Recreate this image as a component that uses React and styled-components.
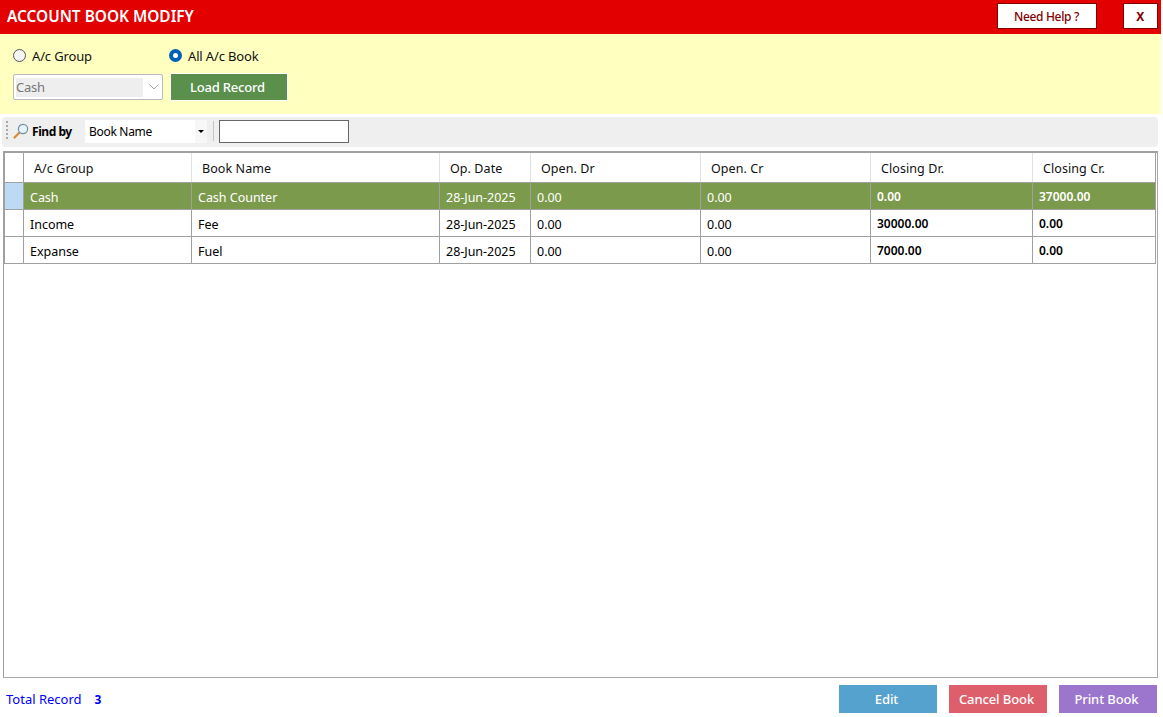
import React from "react";
import styled, { createGlobalStyle } from "styled-components";

const GlobalStyle = createGlobalStyle`
  html, body {
    margin: 0;
    padding: 0;
    background: #fff;
  }
  body {
    font-family: "Noto Sans", "Open Sans", "Liberation Sans", sans-serif;
    font-size: 12px;
    color: #000;
  }
`;

const COLUMNS = "18px 168px 248px 91px 170px 170px 162px 1fr";

const columns = [
  { label: "A/c Group", key: "group" },
  { label: "Book Name", key: "book" },
  { label: "Op. Date", key: "date" },
  { label: "Open. Dr", key: "openDr" },
  { label: "Open. Cr", key: "openCr" },
  { label: "Closing Dr.", key: "closeDr", bold: true },
  { label: "Closing Cr.", key: "closeCr", bold: true },
];

const rows = [
  { group: "Cash", book: "Cash Counter", date: "28-Jun-2025", openDr: "0.00", openCr: "0.00", closeDr: "0.00", closeCr: "37000.00", selected: true },
  { group: "Income", book: "Fee", date: "28-Jun-2025", openDr: "0.00", openCr: "0.00", closeDr: "30000.00", closeCr: "0.00" },
  { group: "Expanse", book: "Fuel", date: "28-Jun-2025", openDr: "0.00", openCr: "0.00", closeDr: "7000.00", closeCr: "0.00" },
];

const Page = styled.div`
  width: 1161px;
  height: 717px;
  display: flex;
  flex-direction: column;
  overflow: hidden;
`;

const TitleBar = styled.header`
  height: 34px;
  flex: none;
  background: #e30000;
  display: flex;
  align-items: center;
  padding: 3px 3px 5px 7px;
  box-sizing: border-box;
`;

const Title = styled.h1`
  margin: 0 auto 0 0;
  color: #fff;
  font-size: 15.4px;
  font-weight: 600;
`;

const HeaderButton = styled.button`
  height: 26px;
  width: ${(p) => p.$width}px;
  margin-left: ${(p) => p.$gap}px;
  padding: 0 1px 0 0;
  background: #fff;
  border: 1px solid #800000;
  color: #800000;
  font: inherit;
  font-size: 12px;
  font-weight: ${(p) => (p.$bold ? 700 : 500)};
  letter-spacing: -0.35px;
`;

const FilterPanel = styled.section`
  height: 80px;
  flex: none;
  box-sizing: border-box;
  background: #ffffc0;
  padding: 13px 13px 0;
  display: grid;
  grid-template-columns: 156px 1fr;
  grid-template-rows: 17px 28px;
  row-gap: 9px;
  align-items: center;
`;

const RadioLabel = styled.label`
  display: flex;
  align-items: center;
  gap: 6px;
  font-size: 13px;
  letter-spacing: -0.15px;
  color: #111;
`;

const RadioDot = styled.span`
  box-sizing: border-box;
  width: 13px;
  height: 13px;
  border-radius: 50%;
  border: ${(p) => (p.$on ? "4px solid #0060b8" : "1px solid #555")};
  background: ${(p) => (p.$on ? "#fff" : "#f4f4f4")};
`;

const GroupSelect = styled.div`
  box-sizing: border-box;
  width: 150px;
  height: 26px;
  background: #fff;
  border: 1px solid #bbb;
  border-radius: 2px;
  padding: 2px;
  display: flex;
  align-items: center;
  color: #777;
  font-size: 13px;
  letter-spacing: -0.25px;
`;

const GroupValue = styled.span`
  width: 127px;
  height: 19px;
  background: #eeeeee;
  display: flex;
  align-items: center;
`;

const GroupArrow = styled.svg`
  margin-left: 5px;
`;

const LoadButton = styled.button`
  width: 118px;
  height: 28px;
  box-sizing: border-box;
  margin: 0 0 0 1px;
  border: 1px solid #fff;
  background: #5a8f4c;
  color: #fff;
  font: inherit;
  font-size: 13px;
  font-weight: 500;
  letter-spacing: -0.2px;
  padding: 0 3px 0 0;
`;

const Toolbar = styled.div`
  height: 30px;
  flex: none;
  box-sizing: border-box;
  margin: 3px 3px 0 2px;
  background: #efefef;
  border-radius: 4px;
  display: flex;
  align-items: center;
  padding: 0 0 2px 4px;
`;

const Grip = styled.span`
  width: 2px;
  height: 20px;
  background-image: linear-gradient(#a8a8a8 50%, transparent 50%);
  background-size: 2px 4px;
`;

const FindIcon = styled.svg`
  margin-left: 5px;
`;

const FindLabel = styled.span`
  margin-left: 3px;
  width: 53px;
  font-size: 12px;
  font-weight: 700;
  letter-spacing: -0.45px;
`;

const FindSelect = styled.div`
  width: 122px;
  height: 23px;
  background: #fff;
  display: flex;
  align-items: center;
  padding-left: 4px;
  box-sizing: border-box;
  font-size: 12px;
  letter-spacing: -0.3px;
`;

const FindValue = styled.span`
  flex: 1;
`;

const FindCaret = styled.span`
  width: 12px;
  height: 100%;
  background: #f7f7f7;
  display: flex;
  align-items: center;
  justify-content: center;
  &::after {
    content: "";
    border-left: 3px solid transparent;
    border-right: 3px solid transparent;
    border-top: 3px solid #000;
  }
`;

const ToolSeparator = styled.span`
  width: 1px;
  height: 20px;
  background: #c4c4c4;
  margin: 0 5px 0 6px;
`;

const FindInput = styled.input`
  width: 130px;
  height: 23px;
  box-sizing: border-box;
  border: 1px solid #666;
  background: #fff;
  padding: 0 3px;
`;

const GridFrame = styled.div`
  flex: none;
  height: 527px;
  box-sizing: border-box;
  margin: 4px 3px 0 3px;
  border: 1px solid #a8a8a8;
  border-top: 2px solid #a0a0a0;
  border-left: 1px solid #a0a0a0;
`;

const HeadRow = styled.div`
  display: grid;
  grid-template-columns: ${COLUMNS};
  height: 29px;
  margin-right: 1px;
  border-left: 1px solid #a0a0a0;
  border-right: 1px solid #a0a0a0;
  border-bottom: 1px solid #a0a0a0;
`;

const HeadCell = styled.div`
  border-left: 1px solid #e2e2e2;
  padding: 1px 0 0 10px;
  display: flex;
  align-items: center;
  font-size: 12.5px;
  letter-spacing: 0.08px;
  color: #111;
  &:first-child {
    border-left: 0;
    padding: 0;
  }
  &:nth-child(2) {
    border-left-color: #a0a0a0;
  }
`;

const DataRow = styled.div`
  display: grid;
  grid-template-columns: ${COLUMNS};
  height: 26px;
  margin-right: 1px;
  border-left: 1px solid #a0a0a0;
  border-right: 1px solid #a0a0a0;
  border-bottom: 1px solid #a0a0a0;
  background: ${(p) => (p.$selected ? "#7c9a4b" : "#fff")};
  color: ${(p) => (p.$selected ? "#fff" : "#000")};
`;

const RowMarker = styled.div`
  background: ${(p) => (p.$selected ? "#bcdaf3" : "#fff")};
`;

const Cell = styled.div`
  border-left: 1px solid #a0a0a0;
  padding: ${(p) => (p.$bold ? "0" : "2px")} 0 0 6px;
  display: flex;
  align-items: center;
  font-size: ${(p) => (p.$bold ? "12px" : "12.5px")};
  font-weight: ${(p) => (p.$bold ? 600 : 400)};
  letter-spacing: ${(p) => (p.$bold ? "0" : "-0.02px")};
`;

const Footer = styled.footer`
  flex: 1;
  display: flex;
  align-items: flex-start;
  padding: 7px 4px 0 6px;
`;

const Total = styled.div`
  margin-right: auto;
  height: 28px;
  display: flex;
  align-items: center;
  color: #0000ff;
  font-size: 13px;
`;

const TotalCount = styled.b`
  margin-left: 13px;
  font-size: 12px;
`;

const ActionButton = styled.button`
  width: 98px;
  height: 28px;
  margin-left: 12px;
  border: 0;
  padding: 0 3px 0 0;
  background: ${(p) => p.$color};
  color: #fff;
  font: inherit;
  font-size: 13px;
  font-weight: 500;
  letter-spacing: -0.1px;
  &:first-of-type {
    margin-left: 0;
  }
`;

export default function App() {
  return (
    <Page>
      <GlobalStyle />
      <TitleBar>
        <Title>ACCOUNT BOOK MODIFY</Title>
        <HeaderButton $width={100} $gap={0}>Need Help ?</HeaderButton>
        <HeaderButton $width={35} $gap={26} $bold>X</HeaderButton>
      </TitleBar>

      <FilterPanel>
        <RadioLabel><RadioDot />A/c Group</RadioLabel>
        <RadioLabel><RadioDot $on />All A/c Book</RadioLabel>
        <GroupSelect>
          <GroupValue>Cash</GroupValue>
          <GroupArrow width="12" height="8" viewBox="0 0 12 8">
            <path d="M1.5 1.5 6 6l4.5-4.5" fill="none" stroke="#aaa" strokeWidth="1" />
          </GroupArrow>
        </GroupSelect>
        <LoadButton>Load Record</LoadButton>
      </FilterPanel>

      <Toolbar>
        <Grip />
        <FindIcon width="16" height="16" viewBox="0 0 16 16">
          <path d="M1.5 14.5 6 10" stroke="#d98a2b" strokeWidth="2.2" strokeLinecap="round" />
          <circle cx="10" cy="6" r="4.6" fill="#e8f3fb" stroke="#6d8fa8" strokeWidth="1.2" />
        </FindIcon>
        <FindLabel>Find by</FindLabel>
        <FindSelect>
          <FindValue>Book Name</FindValue>
          <FindCaret />
        </FindSelect>
        <ToolSeparator />
        <FindInput />
      </Toolbar>

      <GridFrame>
        <HeadRow>
          <HeadCell />
          {columns.map((col) => (
            <HeadCell key={col.key}>{col.label}</HeadCell>
          ))}
        </HeadRow>
        {rows.map((row) => (
          <DataRow key={row.group} $selected={row.selected}>
            <RowMarker $selected={row.selected} />
            {columns.map((col) => (
              <Cell key={col.key} $bold={col.bold}>{row[col.key]}</Cell>
            ))}
          </DataRow>
        ))}
      </GridFrame>

      <Footer>
        <Total>
          Total Record
          <TotalCount>3</TotalCount>
        </Total>
        <ActionButton $color="#55a2cf">Edit</ActionButton>
        <ActionButton $color="#dd5f6c">Cancel Book</ActionButton>
        <ActionButton $color="#9c75cd">Print Book</ActionButton>
      </Footer>
    </Page>
  );
}
